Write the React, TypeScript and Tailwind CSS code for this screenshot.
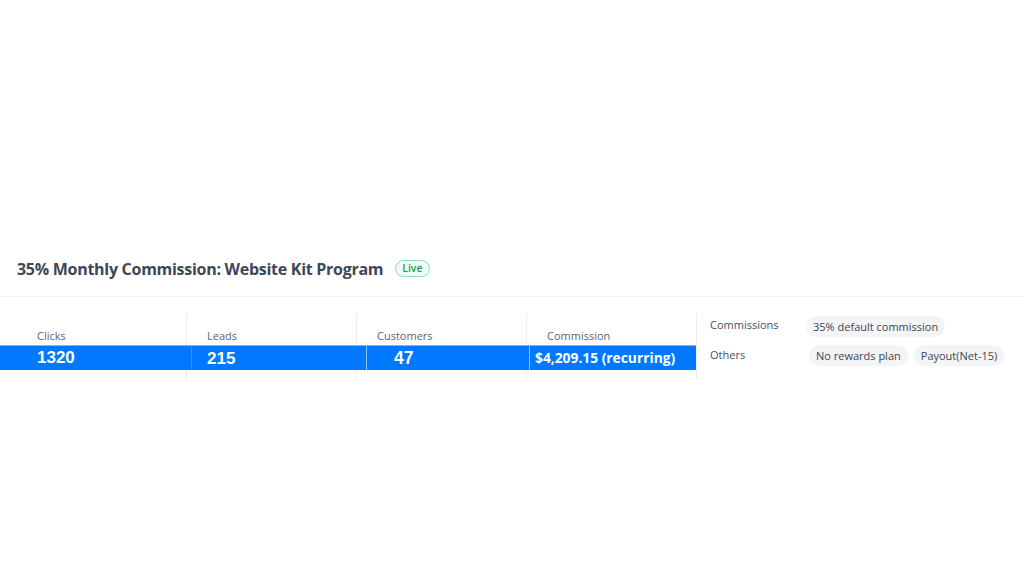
import React from 'react';

const stats = [
  { label: 'Clicks' },
  { label: 'Leads' },
  { label: 'Customers' },
  { label: 'Commission' },
];

export default function App() {
  return (
    <div className="w-[1024px] h-[576px] bg-white overflow-hidden" style={{ fontFamily: '"Open Sans", "Noto Sans", sans-serif' }}>
      <div className="h-[245px]" />

      {/* Title */}
      <div className="h-[52px] border-b border-[#f0f1f3] flex items-center pl-[17px] gap-[12px] pb-[4px]">
        <h1 className="text-[16px] font-bold text-[#3d4756] tracking-[-0.28px]">35% Monthly Commission: Website Kit Program</h1>
        <span className="h-[17px] px-[6px] rounded-full border border-[#8fdcb0] bg-[#f1fbf5] text-[10.5px] leading-[15px] font-semibold text-[#1f9d55]">Live</span>
      </div>

      {/* Stats */}
      <div className="flex pt-[16px]">
        <div className="relative flex pl-[17px]">
          {stats.map((s) => (
            <div key={s.label} className="w-[170px] h-[67px] border-r border-[#eceef1] pl-[20px] pt-[14px]">
              <div className="text-[11px] text-[#5f6470] leading-[18px]">{s.label}</div>
            </div>
          ))}

          {/* highlighted values bar */}
          <div className="absolute left-0 top-[32px] h-[25px] w-[696px] flex bg-[#0078ff] border-t border-[#6fb6ff] text-white">
            <div className="w-[191px] pl-[37px] flex items-center text-[17px] font-bold" style={{ fontFamily: '"Liberation Sans", Arial, sans-serif' }}>1320</div>
            <div className="w-[175px] border-l border-[#2f8fff] pl-[15px] flex items-center text-[17px] font-bold pt-[2px]" style={{ fontFamily: '"Liberation Sans", Arial, sans-serif' }}>215</div>
            <div className="w-[163px] border-l border-[#8cc6ff] pl-[27px] flex items-center text-[17.5px] font-bold" style={{ fontFamily: '"Liberation Sans", Arial, sans-serif' }}>47</div>
            <div className="flex-1 border-l border-[#8cc6ff] pl-[5px] flex items-center text-[13.8px] font-bold">$4,209.15 (recurring)</div>
          </div>
        </div>

        {/* Right panel */}
        <div className="pl-[13px] pt-[1px] flex flex-col gap-[8px]">
          <div className="flex items-center">
            <div className="w-[96px] text-[11px] text-[#4a505c]">Commissions</div>
            <span className="h-[21px] px-[7px] rounded-full bg-[#f3f4f6] text-[11px] leading-[21px] text-[#3f4550] mt-[2px]">35% default commission</span>
          </div>
          <div className="flex items-center gap-[6px]">
            <div className="w-[93px] text-[11px] text-[#4a505c] -mt-[1px]">Others</div>
            <span className="h-[21px] px-[7px] rounded-full bg-[#f3f4f6] text-[11px] leading-[21px] text-[#3f4550]">No rewards plan</span>
            <span className="h-[21px] px-[7px] rounded-full bg-[#f3f4f6] text-[11px] leading-[21px] text-[#3f4550]">Payout(Net-15)</span>
          </div>
        </div>
      </div>
    </div>
  );
}
